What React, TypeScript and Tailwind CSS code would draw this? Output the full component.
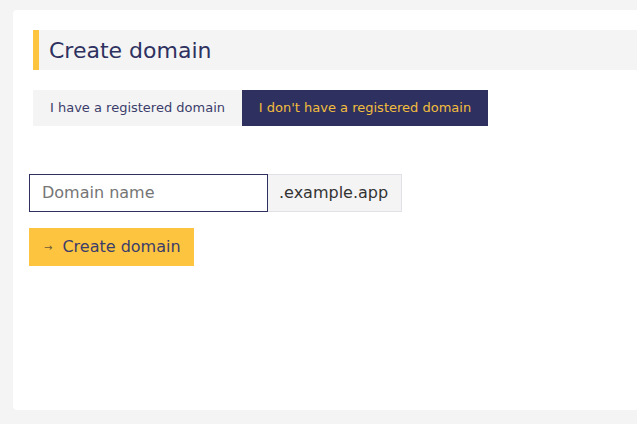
import React, { useState } from 'react';

const App: React.FC = () => {
  const [tab, setTab] = useState<'registered' | 'new'>('new');
  const [name, setName] = useState('');

  return (
    <div className="min-h-screen bg-[#f4f4f4] pt-[10px] pl-[13px] overflow-hidden" style={{ fontFamily: '"DejaVu Sans", Verdana, sans-serif' }}>
      <div className="bg-white rounded-l-[4px] h-[400px] w-[640px] pt-[20px]">
        {/* Title */}
        <div className="ml-[20px] h-[40px] bg-[#f4f4f4] border-l-[6px] border-[#fdc43f] flex items-center pl-[10px]">
          <h1 className="text-[22px] text-[#2e3160]">Create domain</h1>
        </div>

        {/* Tabs */}
        <div className="ml-[20px] mt-[20px] flex h-[36px]">
          <button
            onClick={() => setTab('registered')}
            className={`w-[209px] text-[13px] ${tab === 'registered' ? 'bg-[#2e3160] text-[#f3bd3d] font-medium' : 'bg-[#f4f4f4] text-[#3b3d6b]'}`}
          >
            I have a registered domain
          </button>
          <button
            onClick={() => setTab('new')}
            className={`w-[246px] text-[13px] ${tab === 'new' ? 'bg-[#2e3160] text-[#f3bd3d] font-medium' : 'bg-[#f4f4f4] text-[#3b3d6b]'}`}
          >
            I don't have a registered domain
          </button>
        </div>

        {/* Form */}
        <div className="ml-[16px] mt-[48px]">
          <div className="flex h-[38px]">
            <input
              value={name}
              onChange={(e) => setName(e.target.value)}
              placeholder="Domain name"
              className="w-[239px] border border-[#2e3160] px-[12px] text-[16px] text-[#333] placeholder:text-[#757575] outline-none"
            />
            <span className="w-[134px] flex items-center px-[11px] bg-[#f4f4f4] border border-l-0 border-[#e0e0e6] text-[16px] text-[#333]">
              .example.app
            </span>
          </div>
          <button className="mt-[16px] h-[38px] w-[165px] bg-[#fdc43f] flex items-center pl-[15px] text-[16px] text-[#3b3d6b]">
            <span className="text-[10px] mr-[10px] text-[#6b5a3a]">&#8594;</span>
            Create domain
          </button>
        </div>
      </div>
    </div>
  );
};

export default App;
